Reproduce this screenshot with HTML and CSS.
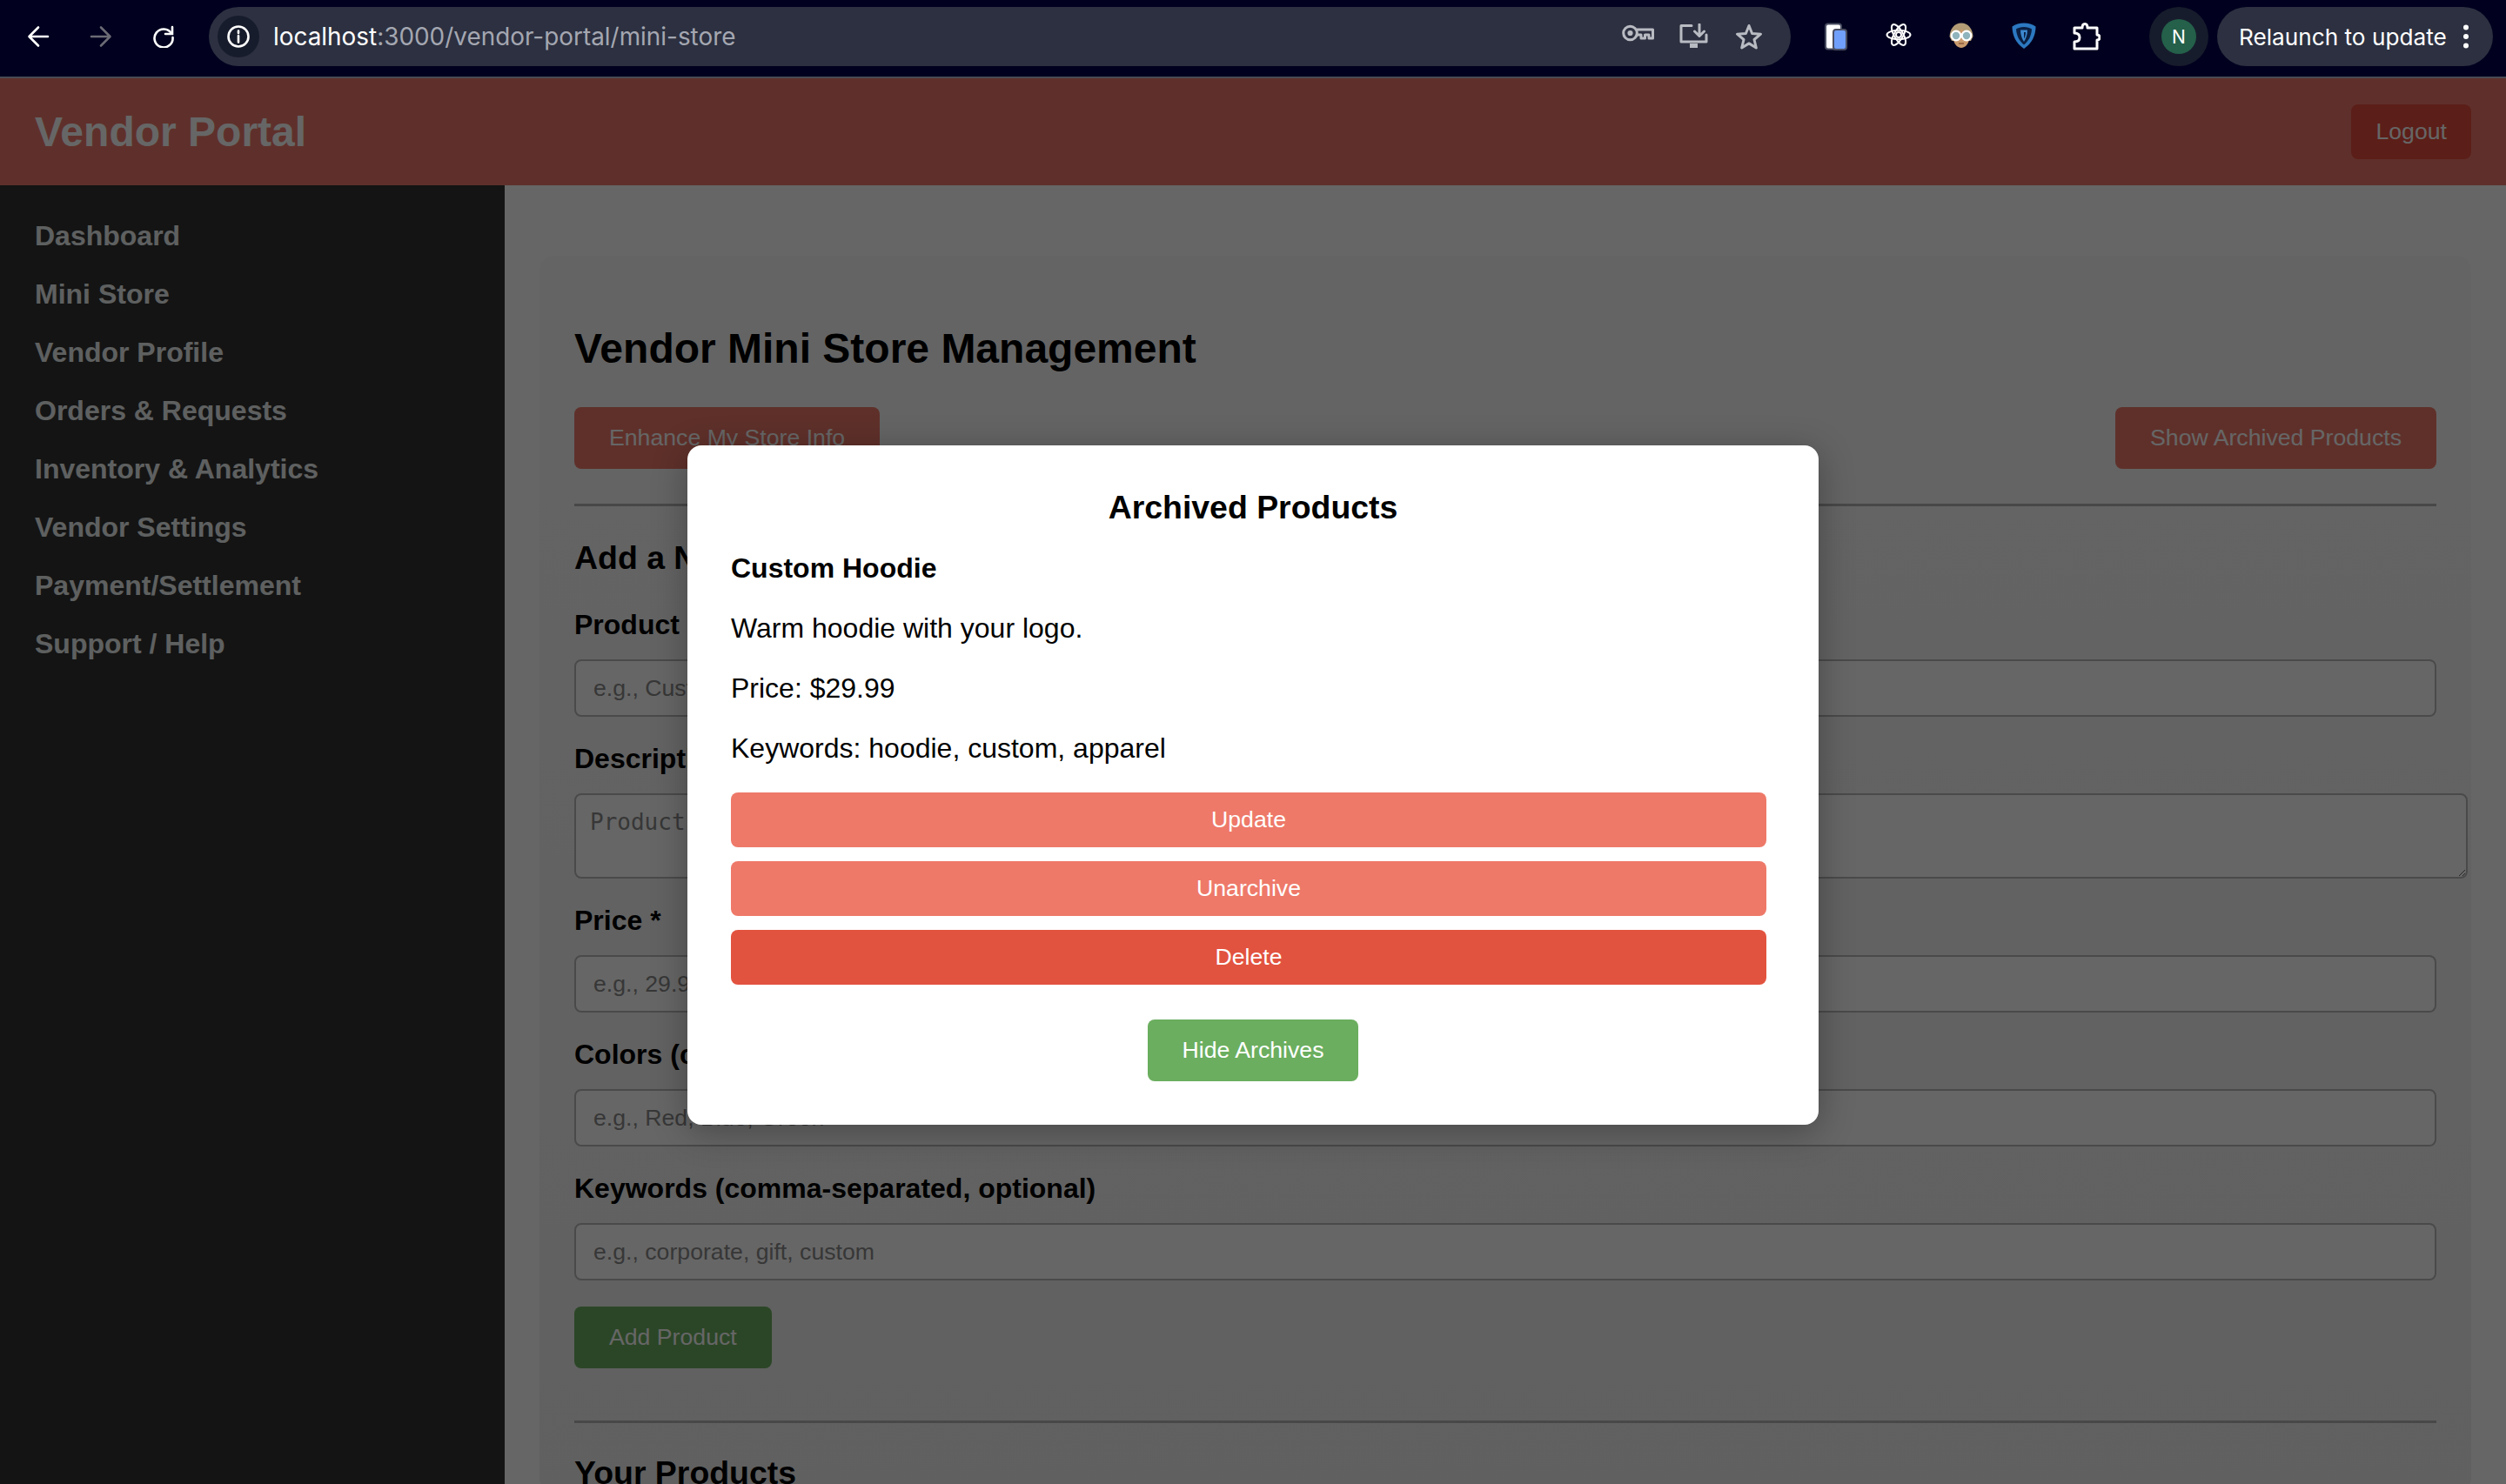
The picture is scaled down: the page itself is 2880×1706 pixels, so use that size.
FILE: index.html
```html
<!DOCTYPE html>
<html lang="en">
<head>
    <meta charset="UTF-8">
    <title>Vendor Mini Store</title>
    <link rel="stylesheet" href="styles.css">
</head>
<body>
    <!-- Browser toolbar -->
    <div class="toolbar">
        <div class="nav-slot">
            <svg width="26" height="26" viewBox="0 0 26 26" class="line-icon"><path d="M24 13H3M13 2.5 2.5 13 13 23.5"/></svg>
        </div>
        <div class="nav-slot">
            <svg width="26" height="26" viewBox="0 0 26 26" class="line-icon dim"><path d="M2 13H23M13 2.5 23.5 13 13 23.5"/></svg>
        </div>
        <div class="nav-slot">
            <svg width="26" height="26" viewBox="0 0 26 26" class="line-icon"><path d="M22 9.5A10.5 10.5 0 1 0 23.5 14"/><path d="M23 2V10H15" stroke-linejoin="miter"/></svg>
        </div>
        <div class="omnibox">
            <span class="info-chip">
                <svg width="28" height="28" viewBox="0 0 28 28" class="line-icon"><circle cx="14" cy="14" r="11.5"/><path d="M14 13V20.5M14 7.5V10"/></svg>
            </span>
            <span class="url"><span class="url-host">localhost</span>:3000/vendor-portal/mini-store</span>
            <div class="omni-actions">
                <div class="omni-slot">
                    <svg width="37" height="22" viewBox="0 0 37 22" class="line-icon grey thick"><circle cx="9.500" cy="11" r="7.800"/><circle cx="9.500" cy="11" r="1.600"/><path d="M17.300 7H35.500V17H31V13H26.500V17H22V13H17.300"/></svg>
                </div>
                <div class="omni-slot">
                    <svg width="33" height="28" viewBox="0 0 33 28" class="line-icon grey thick"><path d="M14 2.500H2V21H31V13"/><path d="M23 1V14M17.500 9 23 14.500 28.500 9"/><path d="M12 25.500H21" stroke-width="5" stroke-linecap="butt"/></svg>
                </div>
                <div class="omni-slot">
                    <svg width="32" height="30" viewBox="0 0 32 30" class="line-icon grey thick"><path d="M16 2.500 19.600 11.500 29.500 12.200 22 18.500 24.300 28 16 22.900 7.700 28 10 18.500 2.500 12.200 12.400 11.500Z"/></svg>
                </div>
            </div>
        </div>
        <div class="ext-row">
            <div class="ext-slot">
                <svg width="28" height="32" viewBox="0 0 28 32"><rect x="2" y="1.500" width="18" height="29" rx="3" fill="#fff" stroke="#4b4f63" stroke-width="2"/><rect x="11" y="8" width="15" height="23" rx="3" fill="#6f9ffb" stroke="#4b4f63" stroke-width="2"/></svg>
            </div>
            <div class="ext-slot">
                <svg width="30" height="28" viewBox="0 0 30 28" fill="none" stroke="#fff" stroke-width="2"><ellipse cx="15" cy="14" rx="13.500" ry="5.200"/><ellipse cx="15" cy="14" rx="13.500" ry="5.200" transform="rotate(60 15 14)"/><ellipse cx="15" cy="14" rx="13.500" ry="5.200" transform="rotate(120 15 14)"/><circle cx="15" cy="14" r="3"/></svg>
            </div>
            <div class="ext-slot">
                <svg width="30" height="30" viewBox="0 0 30 30"><path d="M15 0.500C7 0.500 2 7 1.500 16L4 21H26L28.500 16C28 7 23 0.500 15 0.500Z" fill="#b39c76"/><path d="M6 15C9 13 13 10 16 7C18 11 21 13 24 14.500V20C23 25 19 29 15 29S7 25 6 20Z" fill="#c99a6d"/><circle cx="9" cy="15" r="5.300" fill="#8fb4bd" stroke="#fff" stroke-width="2.200"/><circle cx="21" cy="15" r="5.300" fill="#8fb4bd" stroke="#fff" stroke-width="2.200"/><path d="M12 24H18" stroke="#8d5a3c" stroke-width="1.500"/></svg>
            </div>
            <div class="ext-slot">
                <svg width="28" height="30" viewBox="0 0 28 30"><path d="M14 0.500C9 0.500 4 2 0.500 4.500C0.500 15 5 24 14 30C23 24 27.500 15 27.500 4.500C24 2 19 0.500 14 0.500Z" fill="#2c78c1"/><path d="M14 5C10.500 5 7 6 5 7.500C5.500 15 8.500 21 14 25.500C19.500 21 22.500 15 23 7.500C21 6 17.500 5 14 5Z" fill="#0a1f42"/><path d="M10 8.500H18C18 14 16.500 18 14 22C11.500 18 10 14 10 8.500Z" fill="#3c88cf"/><path d="M14 11H16C16 14 15.300 16 14 18.500Z" fill="#0a1f42"/></svg>
            </div>
            <div class="ext-slot">
                <svg width="32" height="32" viewBox="0 0 32 32" class="line-icon puzzle"><path d="M2 6H11C11 3 12.500 1.500 14 1.500S17 3 17 6H28V14C30.500 14 31 15.500 31 17S30.500 20 28 20V30H2V22C6 22 8 20 8 17S6 12 2 12Z"/></svg>
            </div>
        </div>
        <div class="profile-chip"><span class="profile-badge">N</span></div>
        <div class="relaunch">
            <span>Relaunch to update</span>
            <svg width="8" height="28" viewBox="0 0 8 28" fill="#fff"><circle cx="4" cy="3.500" r="3"/><circle cx="4" cy="14" r="3"/><circle cx="4" cy="24.500" r="3"/></svg>
        </div>
    </div>

    <div class="app">
        <header class="top-bar">
            <h1 class="brand">Vendor Portal</h1>
            <button class="btn btn-logout">Logout</button>
        </header>

        <div class="app-body">
            <nav class="sidebar">
                <a href="#">Dashboard</a>
                <a href="#">Mini Store</a>
                <a href="#">Vendor Profile</a>
                <a href="#">Orders &amp; Requests</a>
                <a href="#">Inventory &amp; Analytics</a>
                <a href="#">Vendor Settings</a>
                <a href="#">Payment/Settlement</a>
                <a href="#">Support / Help</a>
            </nav>

            <main class="content">
                <div class="card">
                    <h2 class="page-title">Vendor Mini Store Management</h2>
                    <div class="action-row">
                        <button class="btn btn-coral btn-big">Enhance My Store Info</button>
                        <button class="btn btn-coral btn-big">Show Archived Products</button>
                    </div>
                    <hr class="rule">
                    <h3 class="section-title">Add a New Product</h3>

                    <form class="product-form">
                        <label class="field-label">Product Name *</label>
                        <input class="field" placeholder="e.g., Custom Mug">
                        <label class="field-label">Description *</label>
                        <textarea class="field-area" rows="2" placeholder="Product description"></textarea>
                        <label class="field-label">Price *</label>
                        <input class="field" placeholder="e.g., 29.99">
                        <label class="field-label">Colors (comma-separated, optional)</label>
                        <input class="field" placeholder="e.g., Red, Blue, Green">
                        <label class="field-label">Keywords (comma-separated, optional)</label>
                        <input class="field" placeholder="e.g., corporate, gift, custom">
                        <button type="button" class="btn btn-green btn-big btn-add">Add Product</button>
                    </form>

                    <hr class="rule rule-lower">
                    <h3 class="section-title section-last">Your Products</h3>
                </div>
            </main>
        </div>

        <!-- Archived products modal -->
        <div class="overlay">
            <div class="modal">
                <h3 class="modal-title">Archived Products</h3>
                <div class="archive-item">
                    <h4>Custom Hoodie</h4>
                    <p>Warm hoodie with your logo.</p>
                    <p>Price: $29.99</p>
                    <p>Keywords: hoodie, custom, apparel</p>
                    <button class="btn btn-coral btn-wide">Update</button>
                    <button class="btn btn-coral btn-wide">Unarchive</button>
                    <button class="btn btn-red btn-wide">Delete</button>
                </div>
                <div class="modal-footer">
                    <button class="btn btn-green btn-big">Hide Archives</button>
                </div>
            </div>
        </div>
    </div>
</body>
</html>
```

FILE: styles.css
```css
/* General */
html, body {
    margin: 0;
    height: 1706px;
    overflow: hidden;
}

body {
    font-family: "Liberation Sans", Arial, sans-serif;
    background: #fff;
    color: #000;
}

/* Browser toolbar */
.toolbar {
    height: 84px;
    display: flex;
    align-items: center;
    padding: 0 0 4px 8px;
    background: #01011f;
    border-bottom: 2px solid #4a4a55;
    font-family: Inter, "Liberation Sans", sans-serif;
    color: #fff;
}

.line-icon {
    fill: none;
    stroke: #fff;
    stroke-width: 2.6;
    stroke-linecap: round;
    stroke-linejoin: round;
}

.line-icon.dim {
    stroke: #6b6b75;
}

.line-icon.grey {
    stroke: #b9bbc2;
}

.line-icon.thick {
    stroke-width: 3;
}

.line-icon.puzzle {
    stroke-width: 3;
}

.nav-slot {
    width: 72px;
    display: flex;
    justify-content: center;
}

.omnibox {
    width: 1818px;
    height: 68px;
    margin-left: 16px;
    display: flex;
    align-items: center;
    background: #2c3040;
    border-radius: 34px;
}

.info-chip {
    width: 48px;
    height: 48px;
    margin-left: 10px;
    display: flex;
    align-items: center;
    justify-content: center;
    background: #171c2c;
    border-radius: 50%;
}

.url {
    margin-left: 16px;
    font-size: 27.9px;
    color: #a4a7b1;
}

.url-host {
    color: #fff;
}

.omni-actions {
    display: flex;
    margin-left: auto;
    padding-right: 16px;
}

.omni-slot {
    width: 64px;
    display: flex;
    justify-content: center;
}

.ext-row {
    display: flex;
    margin-left: 16px;
}

.ext-slot {
    width: 72px;
    display: flex;
    justify-content: center;
}

.profile-chip {
    width: 68px;
    height: 68px;
    margin-left: 36px;
    display: flex;
    align-items: center;
    justify-content: center;
    background: #171c2c;
    border-radius: 50%;
}

.profile-badge {
    width: 40px;
    height: 40px;
    display: flex;
    align-items: center;
    justify-content: center;
    background: #24604a;
    border-radius: 50%;
    font-size: 21px;
}

.relaunch {
    width: 317px;
    height: 68px;
    margin-left: 10px;
    padding: 0 27px 0 25px;
    box-sizing: border-box;
    display: flex;
    align-items: center;
    justify-content: space-between;
    background: #2c3040;
    border-radius: 34px;
    font-size: 26.2px;
}

/* App shell */
.app {
    position: relative;
    height: 1616px;
    overflow: hidden;
}

.top-bar {
    height: 123px;
    padding: 0 40px;
    display: flex;
    align-items: center;
    justify-content: space-between;
    background: #ed786b;
}

.brand {
    margin: 0;
    font-size: 48px;
    color: #fff;
}

.app-body {
    display: flex;
}

/* Sidebar */
.sidebar {
    width: 580px;
    height: 1493px;
    flex-shrink: 0;
    box-sizing: border-box;
    padding: 40px;
    display: flex;
    flex-direction: column;
    gap: 30px;
    background: #333;
}

.sidebar a {
    color: #ecf0f1;
    font-size: 32px;
    font-weight: bold;
    line-height: 37px;
    text-decoration: none;
}

/* Main content */
.content {
    flex: 1;
    padding: 81px 40px 0;
    background: #fff;
}

.card {
    padding: 79px 40px 0;
    background: linear-gradient(#fbfbfb, #f1f1f1);
    border-radius: 16px;
}

.page-title {
    margin: 0 0 40px;
    font-size: 48px;
    line-height: 55px;
}

.action-row {
    display: flex;
    justify-content: space-between;
}

.rule {
    margin: 40px 0 0;
    border: 0;
    border-top: 3px solid #b4b4b4;
}

.rule-lower {
    margin-top: 60px;
}

.section-title {
    margin: 0;
    padding-top: 38px;
    font-size: 37.44px;
    line-height: 43px;
}

.section-last {
    padding-top: 36px;
}

/* Form */
.product-form {
    display: flex;
    flex-direction: column;
    align-items: flex-start;
}

.field-label {
    margin-top: 30px;
    margin-bottom: 21px;
    font-size: 32px;
    font-weight: bold;
    line-height: 37px;
}

.section-title + .product-form .field-label:first-child {
    margin-top: 37px;
}

.field {
    width: 100%;
    height: 66px;
    box-sizing: border-box;
    padding: 16px 20px;
    border: 2px solid #b8b8b8;
    border-radius: 8px;
    background: #fff;
    font-family: "Liberation Sans", Arial, sans-serif;
    font-size: 26.67px;
}

.field-area {
    width: 100%;
    height: 62px;
    padding: 16px;
    border: 2px solid #b8b8b8;
    border-radius: 8px;
    background: #fff;
    font-family: "DejaVu Sans Mono", monospace;
    font-size: 26px;
}

.field::placeholder,
.field-area::placeholder {
    color: #8a8a8a;
}

/* Buttons */
.btn {
    border: 0;
    border-radius: 8px;
    color: #fff;
    font-family: "Liberation Sans", Arial, sans-serif;
    font-size: 26.67px;
}

.btn-big {
    padding: 20px 40px;
}

.btn-wide {
    display: block;
    width: 100%;
    padding: 16px;
    margin-top: 16px;
}

.btn-wide:first-of-type {
    margin-top: 0;
}

.btn-logout {
    padding: 16px 28px;
    background: #e64b3c;
}

.btn-coral {
    background: #ee7969;
}

.btn-red {
    background: #e2533f;
}

.btn-green {
    background: #6bae5f;
}

.btn-add {
    margin-top: 30px;
}

/* Modal */
.overlay {
    position: absolute;
    inset: 0;
    padding-top: 422px;
    display: flex;
    justify-content: center;
    align-items: flex-start;
    background: rgba(0, 0, 0, 0.6);
}

.modal {
    width: 1300px;
    box-sizing: border-box;
    padding: 50px;
    background: #fff;
    border-radius: 16px;
    box-shadow: 0 8px 40px rgba(0, 0, 0, 0.3);
}

.modal-title {
    margin: 0 0 30px;
    font-size: 37.44px;
    line-height: 43px;
    text-align: center;
}

.archive-item {
    padding-right: 10px;
}

.archive-item h4 {
    margin: 0 0 32px;
    font-size: 32px;
    line-height: 37px;
}

.archive-item p {
    margin: 0 0 32px;
    font-size: 32px;
    line-height: 37px;
}

.modal-footer {
    margin-top: 40px;
    display: flex;
    justify-content: center;
}
```
